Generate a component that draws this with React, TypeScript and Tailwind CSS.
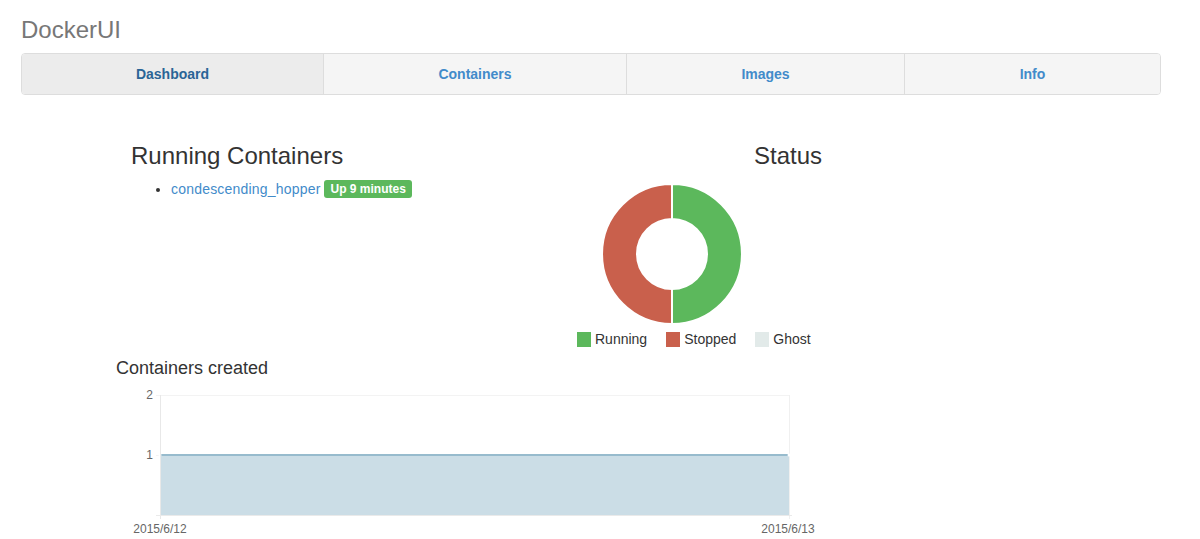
import React from "react";

const font = { fontFamily: '"Liberation Sans", Arial, Helvetica, sans-serif' };

function Donut() {
  return (
    <svg width="144" height="144" viewBox="0 0 144 144">
      <path
        d="M72 2 A70 70 0 0 1 72 142 L72 107 A35 35 0 0 0 72 37 Z"
        fill="#5cb85c"
        stroke="#ffffff"
        strokeWidth="2"
      />
      <path
        d="M72 142 A70 70 0 0 1 72 2 L72 37 A35 35 0 0 0 72 107 Z"
        fill="#c9604c"
        stroke="#ffffff"
        strokeWidth="2"
      />
    </svg>
  );
}

function LineChart() {
  return (
    <svg width="710" height="154" viewBox="0 0 710 154" style={font}>
      {/* grid */}
      <line x1="40" y1="10.5" x2="673" y2="10.5" stroke="#f3f3f3" strokeWidth="1" />
      <line x1="40" y1="70.5" x2="673" y2="70.5" stroke="#f3f3f3" strokeWidth="1" />
      <line x1="673.5" y1="10" x2="673.5" y2="134" stroke="#f0f0f0" strokeWidth="1" />
      {/* fill */}
      <rect x="44" y="70" width="629" height="60" fill="#cbdde6" />
      <line x1="44" y1="70" x2="673" y2="70" stroke="#97bbcd" strokeWidth="2" />
      <circle cx="44" cy="70" r="1.5" fill="#ffffff" />
      <circle cx="673" cy="70" r="1.5" fill="#ffffff" />
      {/* axes */}
      <line x1="44.5" y1="10" x2="44.5" y2="134" stroke="#e8e8e8" strokeWidth="1" />
      <line x1="40" y1="130.5" x2="676" y2="130.5" stroke="#eaeaea" strokeWidth="1" />
      {/* labels */}
      <text x="37" y="14" textAnchor="end" fontSize="12" fill="#666666">2</text>
      <text x="37" y="74" textAnchor="end" fontSize="12" fill="#666666">1</text>
      <text x="44" y="148" textAnchor="middle" fontSize="12" fill="#666666">2015/6/12</text>
      <text x="672" y="148" textAnchor="middle" fontSize="12" fill="#666666">2015/6/13</text>
    </svg>
  );
}

export default function App() {
  return (
    <div className="w-[1200px] h-[539px] overflow-hidden bg-white text-[#333333]" style={font}>
      <div className="px-[21px] pt-[17px]">
        <div className="text-[24px] leading-[26px] text-[#777777]">DockerUI</div>
        <nav className="mt-[10px] flex h-[42px] w-[1140px] rounded-[4px] border border-[#dddddd] overflow-hidden text-[14px] font-bold">
          <div className="w-[301px] flex items-center justify-center bg-[#ececec] text-[#2a6496]">Dashboard</div>
          <div className="w-[303px] flex items-center justify-center bg-[#f5f5f5] border-l border-[#dddddd] text-[#428bca]">Containers</div>
          <div className="w-[278px] flex items-center justify-center bg-[#f5f5f5] border-l border-[#dddddd] text-[#428bca]">Images</div>
          <div className="flex-1 flex items-center justify-center bg-[#f5f5f5] border-l border-[#dddddd] text-[#428bca]">Info</div>
        </nav>
      </div>

      <div className="ml-[116px] mt-[48px] flex">
        <div className="w-[444px] pl-[15px]">
          <h3 className="text-[24px] leading-[26px] font-normal">Running Containers</h3>
          <ul className="mt-[10px] pl-[40px] list-disc text-[14px] leading-[20px]">
            <li>
              <span className="text-[#428bca] tracking-[0.2px]">condescending_hopper</span>{" "}
              <span className="inline-block align-[1px] rounded-[3px] bg-[#5cb85c] px-[6px] text-[12px] leading-[18px] font-bold text-white">
                Up 9 minutes
              </span>
            </li>
          </ul>
        </div>
        <div className="w-[456px]">
          <h3 className="text-[24px] leading-[26px] font-normal text-center">Status</h3>
          <div className="ml-[40px] mt-[13px]">
            <Donut />
          </div>
          <div className="ml-[17px] mt-[5px] flex items-center text-[14px] leading-[16px]">
            <span className="w-[14px] h-[15px] bg-[#5cb85c]" />
            <span className="ml-[4px]">Running</span>
            <span className="ml-[19px] w-[14px] h-[15px] bg-[#c9604c]" />
            <span className="ml-[4px]">Stopped</span>
            <span className="ml-[19px] w-[14px] h-[15px] bg-[#e2eae9]" />
            <span className="ml-[4px]">Ghost</span>
          </div>
        </div>
      </div>

      <div className="ml-[116px] mt-[11px]">
        <h4 className="text-[18px] leading-[20px] font-normal">Containers created</h4>
        <div className="mt-[7px]">
          <LineChart />
        </div>
      </div>
    </div>
  );
}
